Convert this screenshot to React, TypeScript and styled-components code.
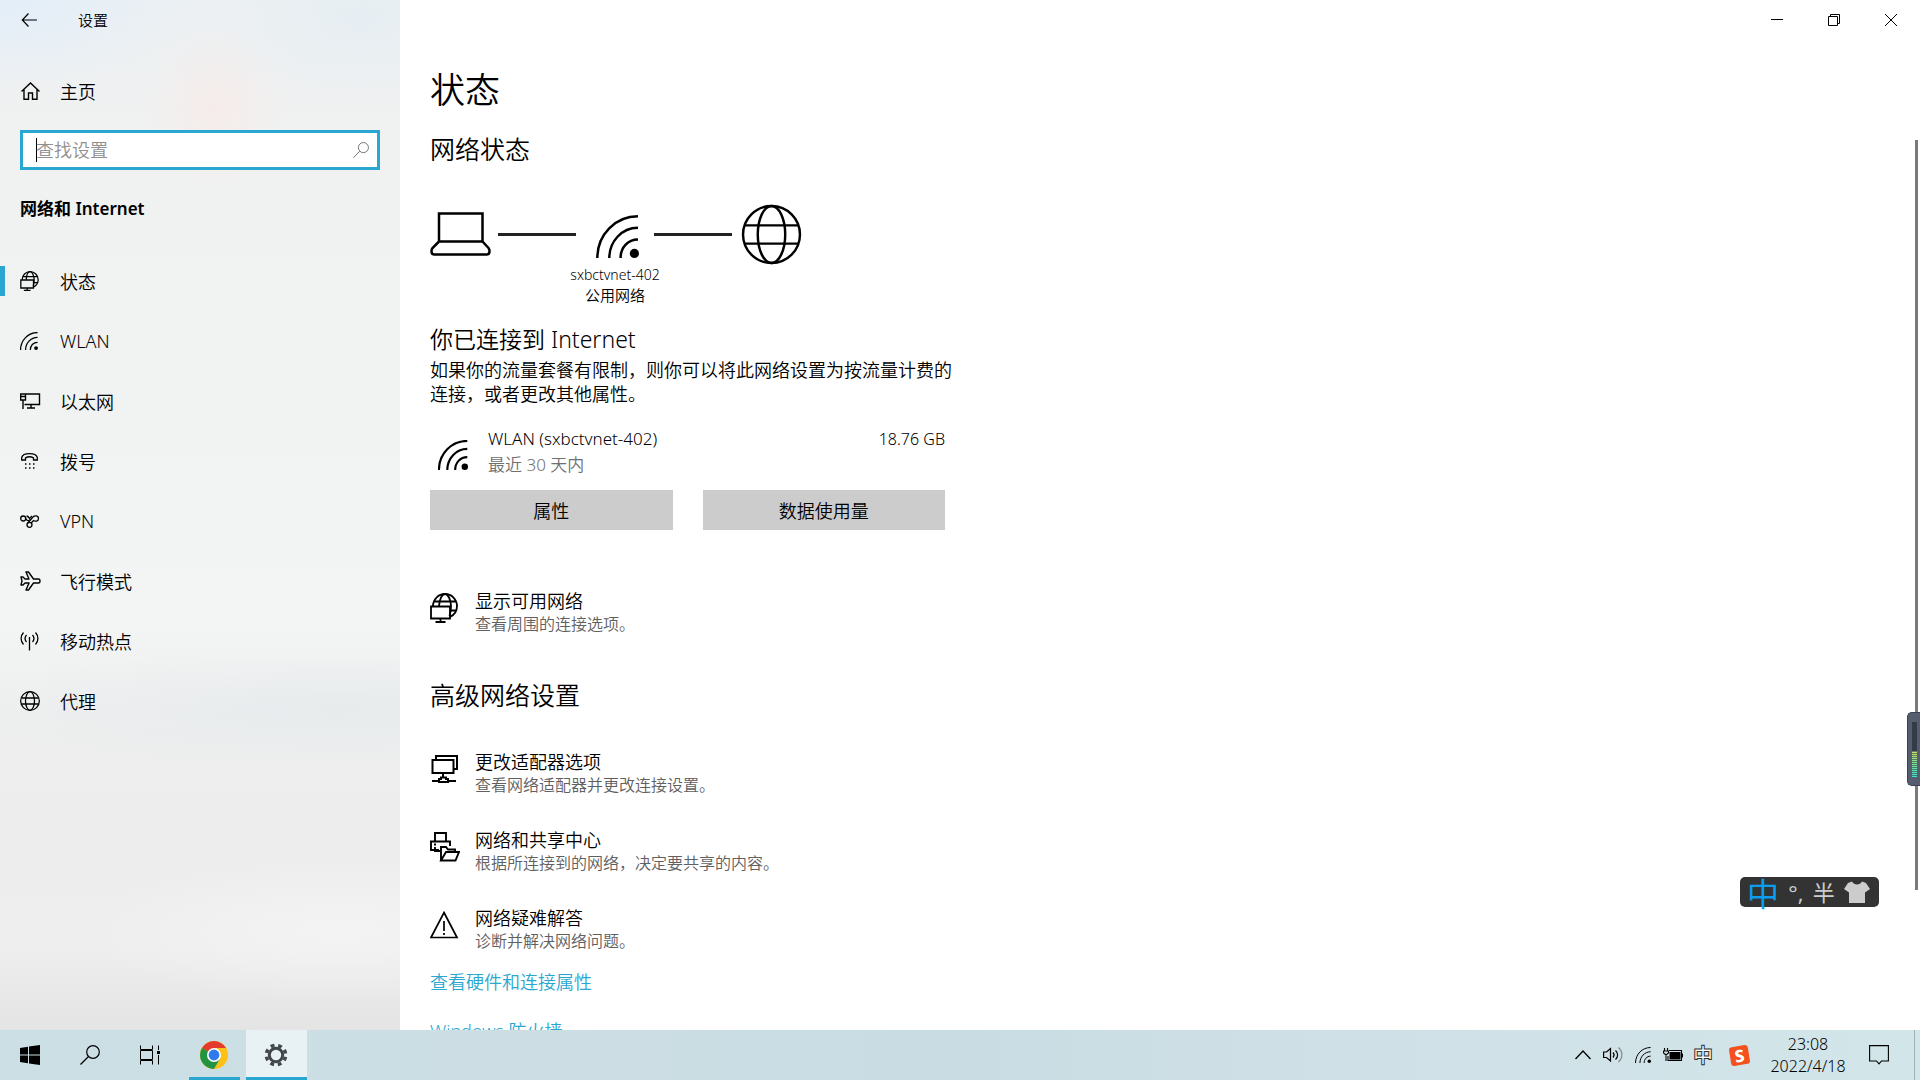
import React from "react";
import styled, { createGlobalStyle, css } from "styled-components";

const ACCENT = "#2aa7d0";

const GlobalStyle = createGlobalStyle`
  *, *::before, *::after { box-sizing: border-box; }
  body {
    margin: 0;
    background: #fff;
    color: #000;
    font-family: "Noto Sans", "Noto Sans CJK SC", sans-serif;
    font-size: 18px;
    font-weight: 350;
  }
  h1, h2, h3, p, ul { margin: 0; padding: 0; font-weight: inherit; }
  ul { list-style: none; }
  button {
    border: 0;
    padding: 0;
    background: none;
    color: inherit;
    font: inherit;
  }
  a { color: inherit; text-decoration: none; }
  svg { display: block; flex: none; }
`;

const Desktop = styled.div`
  position: relative;
  display: flex;
  flex-direction: column;
  height: 100vh;
  overflow: hidden;
`;

const SettingsWindow = styled.div`
  flex: 1;
  min-height: 0;
  display: grid;
  grid-template-columns: 400px minmax(0, 1fr);
`;

/* ---------- sidebar ---------- */

const Sidebar = styled.aside`
  background:
    radial-gradient(ellipse 70px 80px at 215px 108px, rgba(248, 234, 231, 0.7), transparent),
    radial-gradient(ellipse 140px 80px at 360px 20px, rgba(228, 237, 243, 0.7), transparent),
    radial-gradient(ellipse 200px 90px at 0 0, rgba(226, 238, 250, 0.9), transparent),
    radial-gradient(ellipse 420px 60px at 340px 710px, rgba(229, 234, 236, 0.8), transparent),
    radial-gradient(ellipse 260px 70px at 340px 930px, rgba(244, 244, 244, 0.9), transparent),
    linear-gradient(#ecf0f2 0, #f0f1f1 130px, #f1f2f2 400px, #f3f4f4 620px, #eeeeee 740px, #ededed 850px, #eeeeee 950px, #e4e4e4 100%);
`;

const SideTitle = styled.header`
  display: flex;
  align-items: center;
  height: 39px;
  padding-left: 20px;
  gap: 40px;
  font-size: 15px;
`;

const HomeButton = styled.button`
  display: flex;
  align-items: center;
  width: 100%;
  height: 48px;
  margin-top: 28px;
  padding-left: 20px;
  gap: 19px;
`;

const SearchBox = styled.label`
  display: flex;
  align-items: center;
  height: 40px;
  margin: 15px 20px 0;
  padding: 0 8px 0 13px;
  border: 3px solid ${ACCENT};
  background: #fff;
`;

const Caret = styled.span`
  width: 1px;
  height: 24px;
  margin-right: -1px;
  background: #000;
`;

const SearchInput = styled.input`
  flex: 1;
  min-width: 0;
  padding: 0;
  border: 0;
  outline: 0;
  background: none;
  font: inherit;
  caret-color: transparent;
  &::placeholder { color: #909090; opacity: 1; }
`;

const SideHeading = styled.h2`
  margin-top: 24px;
  padding-left: 20px;
  font-size: 17px;
  font-weight: 600;
  line-height: 30px;
`;

const NavList = styled.ul`
  margin-top: 27px;
`;

const NavLink = styled.a<{ $active?: boolean }>`
  display: flex;
  align-items: center;
  height: 60px;
  gap: 19px;
  &::before {
    content: "";
    width: 5px;
    height: 30px;
    margin-right: -4px;
    background: ${(p) => (p.$active ? ACCENT : "transparent")};
  }
`;

const NavIcon = styled.span`
  display: flex;
  align-items: center;
  width: 21px;
`;

/* ---------- main ---------- */

const Main = styled.main`
  min-height: 0;
  overflow: hidden;
  background: #fff;
`;

const CaptionBar = styled.div`
  display: flex;
  justify-content: flex-end;
  height: 40px;
  padding-right: 1px;
`;

const CaptionButton = styled.button`
  display: grid;
  place-items: center;
  width: 57px;
`;

const Content = styled.div`
  padding: 26px 30px 0;
`;

const PageTitle = styled.h1`
  font-size: 35px;
  line-height: 48px;
`;

const SectionTitle = styled.h2<{ $gap: number }>`
  margin-top: ${(p) => p.$gap}px;
  font-size: 25px;
  line-height: 34px;
`;

const Diagram = styled.div`
  display: grid;
  grid-template-columns: 68px 78px 78px 78px 70px;
  grid-template-rows: 60px auto;
  align-items: center;
  margin-top: 38px;
`;

const DiagramCell = styled.div<{ $align: string }>`
  display: flex;
  justify-content: ${(p) => p.$align};
`;

const SignalCell = styled(DiagramCell)`
  padding: 4px 0 0 4px;
`;

const Wire = styled.div`
  height: 3px;
  background: #222;
`;

const DiagramLabel = styled.div`
  grid-column: 2 / 5;
  padding-top: 1px;
  font-size: 14px;
  line-height: 20px;
  text-align: center;
`;

const NetworkKind = styled.div`
  font-size: 15px;
`;

const Connected = styled.h3`
  margin-top: 19px;
  font-size: 23px;
  line-height: 30px;
`;

const Paragraph = styled.p`
  max-width: 524px;
  margin-top: 4px;
  line-height: 24px;
`;

const Panel = styled.div`
  max-width: 515px;
`;

const Usage = styled.div`
  display: flex;
  margin-top: 20px;
  padding-left: 8px;
  gap: 20px;
  font-size: 17px;
  line-height: 26px;
`;

const UsageIcon = styled.div`
  padding-top: 14px;
`;

const UsageText = styled.div`
  flex: 1;
`;

const UsageAmount = styled.div`
  font-size: 16px;
`;

const Muted = styled.div`
  color: #707070;
`;

const ButtonRow = styled.div`
  display: grid;
  grid-template-columns: 1fr 1fr;
  gap: 30px;
  margin-top: 12px;
`;

const PanelButton = styled.button`
  height: 40px;
  background: #ccc;
`;

const LinkGroup = styled.div<{ $gap: number }>`
  display: flex;
  flex-direction: column;
  align-items: flex-start;
  gap: 32px;
  margin-top: ${(p) => p.$gap}px;
`;

const LinkItem = styled.a`
  display: flex;
  align-items: flex-start;
  gap: 15px;
`;

const LinkIcon = styled.span`
  width: 30px;
  padding-top: 4px;
`;

const LinkTitle = styled.div`
  line-height: 24px;
`;

const LinkDescription = styled.div`
  color: #606060;
  font-size: 16px;
  line-height: 22px;
`;

const TextLinks = styled.div`
  display: flex;
  flex-direction: column;
  align-items: flex-start;
  gap: 19px;
  margin-top: 15px;
  color: ${ACCENT};
  line-height: 30px;
`;

/* ---------- overlays ---------- */

const Scrollbar = styled.div`
  position: absolute;
  top: 140px;
  right: 2px;
  width: 3px;
  height: 750px;
  background: #7a7a7a;
`;

const Meter = styled.div`
  position: absolute;
  top: 712px;
  right: 0;
  width: 13px;
  height: 74px;
  padding: 9px 3px 8px 4px;
  border: 1px solid #3b4152;
  border-right: 0;
  border-radius: 5px 0 0 5px;
  background: #565d6e;
`;

const MeterBars = styled.div`
  height: 100%;
  background:
    repeating-linear-gradient(transparent 0 1px, rgba(50, 58, 72, 0.6) 1px 2px),
    linear-gradient(#343a48 0 52%, #cfe06a 52%, #7fe08c 75%, #3fe0d0 100%);
`;

const ImeBar = styled.div`
  position: absolute;
  right: 41px;
  bottom: 173px;
  display: flex;
  align-items: center;
  justify-content: space-between;
  width: 139px;
  height: 30px;
  padding: 0 9px 0 7px;
  border-radius: 5px;
  background: #333;
  color: #ccc;
  font-size: 22px;
  font-weight: 400;
  line-height: 30px;
`;

const ImeMode = styled.span`
  color: #0a9df0;
  font-family: "Noto Sans CJK SC", sans-serif;
  font-size: 32px;
  line-height: 30px;
`;

/* ---------- taskbar ---------- */

const Taskbar = styled.footer`
  display: flex;
  align-items: stretch;
  height: 50px;
  background: linear-gradient(90deg, #cbdfe4 0, #ccdee4 30%, #c9dce3 50%, #cfe1e6 70%, #d2e5e9 100%);
`;

const TaskButton = styled.button<{ $state?: "open" | "active" }>`
  display: grid;
  place-items: center;
  width: 60px;
  ${(p) =>
    p.$state === "open" &&
    css`
      width: 51px;
      margin: 0 6px 0 9px;
      padding-right: 2px;
      box-shadow: inset 0 -3px ${ACCENT};
    `}
  ${(p) =>
    p.$state === "active" &&
    css`
      width: 61px;
      padding-right: 2px;
      background: #e8f1f4;
      box-shadow: inset 0 -3px ${ACCENT};
    `}
`;

const Tray = styled.div`
  display: flex;
  align-items: center;
  gap: 10px;
  margin-left: auto;
`;

const TrayButton = styled.button`
  display: grid;
  place-items: center;
  width: 20px;
  height: 50px;
`;

const TrayIme = styled(TrayButton)`
  margin-right: 6px;
  color: #fff;
  font-family: "Noto Sans CJK SC", sans-serif;
  font-size: 20px;
  font-weight: 700;
  line-height: 20px;
  -webkit-text-stroke: 1px #333;
`;

const SogouBadge = styled.span`
  display: grid;
  place-items: center;
  width: 19px;
  height: 19px;
  border-radius: 3px;
  background: #f4511e;
  color: #fff;
  font-size: 17px;
  font-weight: 800;
  line-height: 19px;
  transform: rotate(-9deg);
`;

const Clock = styled.button`
  width: 98px;
  margin-right: 2px;
  font-size: 16px;
  line-height: 22px;
  text-align: center;
`;

const ShowDesktop = styled.button`
  width: 6px;
  height: 50px;
  margin-left: 15px;
  border-left: 1px solid #9fb0b6;
`;

/* ---------- icons ---------- */

type IconProps = { size?: number; stroke?: number };

const line = { fill: "none", stroke: "currentColor" } as const;

const Wifi = ({ size = 20, stroke = 2 }: IconProps) => (
  <svg width={size} height={size} viewBox="0 0 42 42" {...line} strokeWidth={stroke}>
    <path d="M1.3 42C1.3 19 19 1.3 41 1.3M13 42C13 26 25 12.500 41 12.500M24 42C24 32 31 24 41 24" />
    <circle cx="37.500" cy="37.500" r="4.500" fill="currentColor" stroke="none" />
  </svg>
);

const Globe = ({ size = 20, stroke = 2 }: IconProps) => (
  <svg width={size} height={size} viewBox="0 0 60 60" {...line} strokeWidth={stroke}>
    <circle cx="30" cy="30" r="28" />
    <ellipse cx="30" cy="30" rx="13.500" ry="28" />
    <path d="M4 21H56M4 39H56" />
  </svg>
);

const Laptop = () => (
  <svg width="61" height="44" viewBox="0 0 61 44" {...line} strokeWidth="2.500">
    <path d="M9 1.500H52.500V29.500H9ZM9 29.500L2.500 36C1 38 1 42.500 4 42.500H57C60 42.500 60 38 58.500 36L52.500 29.500" />
  </svg>
);

const NetGlobe = ({ size = 28, stroke = 1.8 }: IconProps) => (
  <svg width={size} height={Math.round((size * 30) / 28)} viewBox="0 0 28 30" {...line} strokeWidth={stroke}>
    <path d="M3 13A12 12 0 0 1 27 13A12 12 0 0 1 20 23.900M4 8.500H26M20 17.500H26.500" />
    <path d="M9 13C9.500 6 12 1 15 1S21 7 21 13C21 17 20.500 20 19.500 23" />
    <path d="M1 13.500H20V25.500H1ZM10.500 25.500V29M5.500 29H15.500" />
  </svg>
);

const BackIcon = () => (
  <svg width="18" height="16" viewBox="0 0 18 16" {...line} strokeWidth="1.200">
    <path d="M17 8H2.500M8.500 1.500L2.300 8L8.500 14.500" />
  </svg>
);

const HomeIcon = () => (
  <svg width="21" height="20" viewBox="0 0 21 20" {...line} strokeWidth="1.400">
    <path d="M1.500 10.500L10.500 2L19.500 10.500M4 8.500V18.300H8.500V12H12.500V18.300H17V8.500" />
  </svg>
);

const SearchIcon = ({ size = 16, stroke = 1.2 }: IconProps) => (
  <svg width={size} height={size} viewBox="0 0 20 20" {...line} strokeWidth={stroke}>
    <circle cx="13" cy="7" r="6.300" />
    <path d="M8.500 11.500L0.500 19.500" />
  </svg>
);

const Ethernet = () => (
  <svg width="21" height="18" viewBox="0 0 21 18" {...line} strokeWidth="1.400">
    <path d="M6 2H19.500V12.500H4.500M11 12.500V16M7 16H15M3 8V17" />
    <path d="M0.700 2H5.500V8H0.700ZM1 4.500H5" />
  </svg>
);

const DialUp = () => (
  <svg width="20" height="18" viewBox="0 0 20 18" {...line} strokeWidth="1.300">
    <path d="M1.700 8V5.500C3 .300 16 .300 17.300 5.500V8H13.500V5.800C11 4.500 8 4.500 5.500 5.800V8Z" />
    <path d="M5 12H14.500M5 16H14.500" strokeDasharray="1.500 2.500" />
  </svg>
);

const Vpn = () => (
  <svg width="20" height="16" viewBox="0 0 20 16" {...line} strokeWidth="1.300">
    <circle cx="3.200" cy="5.500" r="2.500" />
    <path d="M5.700 5.500C7 8.500 9 8 10 6.500M6.500 3C8 3.200 9 4.500 9.500 5.500L12 3" />
    <path d="M7.800 10L13 4C14.500 2.200 18.500 2.500 18.500 5.500S15 8.600 13.500 7.500L11.200 10" />
    <circle cx="9.500" cy="11.800" r="2.500" />
  </svg>
);

const Plane = () => (
  <svg width="21" height="20" viewBox="0 0 21 20" {...line} strokeWidth="1.400" strokeLinejoin="round">
    <path d="M1 6H3L5 8H9L6 1H8.500L13.500 8H18.500C20.500 8 20.500 12 18.500 12H13.500L8.500 19H6L9 12H5L3 14H1L2 10Z" />
  </svg>
);

const Hotspot = () => (
  <svg width="20" height="20" viewBox="0 0 20 20" {...line} strokeWidth="1.300">
    <path d="M9.500 6V19.500M6.500 4C4.800 6 4.800 9 6.500 11M3.500 1.500C.300 5 .300 10 3.500 13.500M12.500 4C14.200 6 14.200 9 12.500 11M15.500 1.500C18.700 5 18.700 10 15.500 13.500" />
  </svg>
);

const Adapter = () => (
  <svg width="30" height="30" viewBox="0 0 30 30" {...line} strokeWidth="2">
    <path d="M6 5V2H27V15H24M2.500 6H23.500V19H2.500ZM13 19V24M2 27H9M18 27H26M9 25H11V23.500H16V25H18V28H9Z" />
  </svg>
);

const Sharing = () => (
  <svg width="30" height="30" viewBox="0 0 30 30" {...line} strokeWidth="1.900">
    <path d="M5 9V1H16V9M9 18H1V9.500H20V14M4 12.500H6" />
    <path d="M11 28.500V15H16L18 17.500H25V20M11 28.500L16 20H29L25.500 28.500ZM5 15V19H10" />
  </svg>
);

const Warning = () => (
  <svg width="30" height="30" viewBox="0 0 30 30" {...line} strokeWidth="1.700">
    <path d="M14 2.500L27 27.500H1ZM14 11V21M14 23V25" />
  </svg>
);

const StartIcon = () => (
  <svg width="20" height="20" viewBox="0 0 20 20" fill="#000">
    <path d="M0 3L8 1.700V9.500H0ZM9 1.500L20 0V9.500H9ZM0 10.500H8V18.300L0 17ZM9 10.500H20V20L9 18.500Z" />
  </svg>
);

const TaskView = () => (
  <svg width="20" height="20" viewBox="0 0 20 20" {...line} strokeWidth="1">
    <path d="M.500 .500V4.500H12.500V.500M.500 5.500H12.500V14.500H.500ZM.500 19.500V15.500H12.500V19.500M18.500 .500V5M18.500 10V19.500" />
    <path d="M17 6H20V9H17Z" fill="currentColor" stroke="none" />
  </svg>
);

const Chrome = () => (
  <svg width="28" height="28" viewBox="0 0 28 28">
    <circle cx="14" cy="14" r="14" fill="#fbc116" />
    <path d="M14 14L1.900 7A14 14 0 0 1 26.100 7Z" fill="#e33b2e" />
    <path d="M14 14L1.900 7A14 14 0 0 0 14 28L20 17.500Z" fill="#229342" />
    <path d="M14 7H26.100L20 14Z" fill="#fbc116" />
    <circle cx="14" cy="14" r="7" fill="#fff" />
    <circle cx="14" cy="14" r="5.400" fill="#2f7bee" />
  </svg>
);

const Gear = () => (
  <svg width="24" height="24" viewBox="0 0 24 24" {...line} stroke="#414649">
    <circle cx="12" cy="12" r="6.700" strokeWidth="3" />
    <circle cx="12" cy="12" r="9.700" strokeWidth="3.400" strokeDasharray="3.800 3.818" strokeDashoffset="-1.900" />
  </svg>
);

const Speaker = () => (
  <svg width="20" height="18" viewBox="0 0 20 18" {...line} strokeWidth="1.200">
    <path d="M.600 6H3.500L7.500 2.500V15L3.500 11.500H.600ZM10 6.500C11.300 8 11.300 10 10 11.500M12.500 4.500C15.300 7 15.300 11 12.500 13.500" />
    <path d="M15.500 1.500C20 5.500 20 12 15.500 16" opacity=".4" />
  </svg>
);

const Battery = () => (
  <svg width="20" height="14" viewBox="0 0 20 14" {...line} strokeWidth="1.100">
    <path d="M6 2.500H18.500V12.500H5V8M1.500 0V3M4.500 0V3M.500 3H5.500V5L3 7L.500 5ZM3 7V13" />
    <path d="M6.500 4H17.500V11.500H6.500ZM18.500 5.500H20V9.500H18.500Z" fill="currentColor" stroke="none" />
  </svg>
);

const Notice = () => (
  <svg width="20" height="20" viewBox="0 0 20 20" {...line} strokeWidth="1.100">
    <path d="M.600 .600H19.400V16H12.500L10 18.800L7.500 16H.600Z" />
  </svg>
);

const Shirt = () => (
  <svg width="26" height="23" viewBox="0 0 26 23" fill="#ccc">
    <path d="M8 .500C10 4.500 16 4.500 18 .500L22 2L26 8L21 11.500V22H5V11.500L0 8L4 2Z" />
  </svg>
);

const navItems: { label: string; icon: React.ReactNode }[] = [
  { label: "状态", icon: <NetGlobe size={19} stroke={1.9} /> },
  { label: "WLAN", icon: <Wifi size={18} stroke={3} /> },
  { label: "以太网", icon: <Ethernet /> },
  { label: "拨号", icon: <DialUp /> },
  { label: "VPN", icon: <Vpn /> },
  { label: "飞行模式", icon: <Plane /> },
  { label: "移动热点", icon: <Hotspot /> },
  { label: "代理", icon: <Globe size={20} stroke={3.8} /> },
];

const advanced = [
  { title: "更改适配器选项", text: "查看网络适配器并更改连接设置。", icon: <Adapter /> },
  { title: "网络和共享中心", text: "根据所连接到的网络，决定要共享的内容。", icon: <Sharing /> },
  { title: "网络疑难解答", text: "诊断并解决网络问题。", icon: <Warning /> },
];

const Entry = ({ icon, title, text }: { icon: React.ReactNode; title: string; text: string }) => (
  <LinkItem href="#">
    <LinkIcon>{icon}</LinkIcon>
    <div>
      <LinkTitle>{title}</LinkTitle>
      <LinkDescription>{text}</LinkDescription>
    </div>
  </LinkItem>
);

export default function App() {
  return (
    <Desktop lang="zh-CN">
      <GlobalStyle />
      <SettingsWindow>
        <Sidebar>
          <SideTitle>
            <button aria-label="返回"><BackIcon /></button>
            <span>设置</span>
          </SideTitle>
          <HomeButton>
            <HomeIcon />
            <span>主页</span>
          </HomeButton>
          <SearchBox>
            <Caret />
            <SearchInput type="text" placeholder="查找设置" aria-label="查找设置" />
            <Muted><SearchIcon size={16} /></Muted>
          </SearchBox>
          <SideHeading>网络和 Internet</SideHeading>
          <nav>
            <NavList>
              {navItems.map((item, i) => (
                <li key={item.label}>
                  <NavLink href="#" $active={i === 0}>
                    <NavIcon>{item.icon}</NavIcon>
                    <span>{item.label}</span>
                  </NavLink>
                </li>
              ))}
            </NavList>
          </nav>
        </Sidebar>

        <Main>
          <CaptionBar>
            <CaptionButton aria-label="最小化">
              <svg width="12" height="12" viewBox="0 0 12 12" {...line}><path d="M0 5.500H12" /></svg>
            </CaptionButton>
            <CaptionButton aria-label="还原">
              <svg width="12" height="12" viewBox="0 0 12 12" {...line}><path d="M.500 2.500H9.500V11.500H.500ZM2.500 2.500V.500H11.500V9.500H9.500" /></svg>
            </CaptionButton>
            <CaptionButton aria-label="关闭">
              <svg width="12" height="12" viewBox="0 0 12 12" {...line}><path d="M0 0L12 12M12 0L0 12" /></svg>
            </CaptionButton>
          </CaptionBar>
          <Content>
            <PageTitle>状态</PageTitle>
            <SectionTitle $gap={18}>网络状态</SectionTitle>
            <Diagram>
              <DiagramCell $align="flex-start"><Laptop /></DiagramCell>
              <Wire />
              <SignalCell $align="center"><Wifi size={43} stroke={2.4} /></SignalCell>
              <Wire />
              <DiagramCell $align="flex-end"><Globe size={61} stroke={2.4} /></DiagramCell>
              <DiagramLabel>
                <div>sxbctvnet-402</div>
                <NetworkKind>公用网络</NetworkKind>
              </DiagramLabel>
            </Diagram>
            <Connected>你已连接到 Internet</Connected>
            <Paragraph>如果你的流量套餐有限制，则你可以将此网络设置为按流量计费的连接，或者更改其他属性。</Paragraph>
            <Panel>
              <Usage>
                <UsageIcon><Wifi size={30} stroke={3} /></UsageIcon>
                <UsageText>
                  <div>WLAN (sxbctvnet-402)</div>
                  <Muted>最近 30 天内</Muted>
                </UsageText>
                <UsageAmount>18.76 GB</UsageAmount>
              </Usage>
              <ButtonRow>
                <PanelButton>属性</PanelButton>
                <PanelButton>数据使用量</PanelButton>
              </ButtonRow>
            </Panel>
            <LinkGroup $gap={59}>
              <Entry icon={<NetGlobe />} title="显示可用网络" text="查看周围的连接选项。" />
            </LinkGroup>
            <SectionTitle $gap={43}>高级网络设置</SectionTitle>
            <LinkGroup $gap={38}>
              {advanced.map((item) => (
                <Entry key={item.title} {...item} />
              ))}
            </LinkGroup>
            <TextLinks>
              <a href="#">查看硬件和连接属性</a>
              <a href="#">Windows 防火墙</a>
            </TextLinks>
          </Content>
        </Main>
      </SettingsWindow>

      <Taskbar>
        <TaskButton aria-label="开始"><StartIcon /></TaskButton>
        <TaskButton aria-label="搜索"><SearchIcon size={20} stroke={1.2} /></TaskButton>
        <TaskButton aria-label="任务视图"><TaskView /></TaskButton>
        <TaskButton aria-label="Chrome" $state="open"><Chrome /></TaskButton>
        <TaskButton aria-label="设置" $state="active"><Gear /></TaskButton>
        <Tray>
          <TrayButton aria-label="显示隐藏的图标">
            <svg width="16" height="10" viewBox="0 0 16 10" {...line} strokeWidth="1.300"><path d="M.500 9L8 1L15.500 9" /></svg>
          </TrayButton>
          <TrayButton aria-label="音量"><Speaker /></TrayButton>
          <TrayButton aria-label="WLAN"><Wifi size={16} stroke={2.6} /></TrayButton>
          <TrayButton aria-label="电池"><Battery /></TrayButton>
          <TrayIme>中</TrayIme>
          <TrayButton><SogouBadge>S</SogouBadge></TrayButton>
          <Clock>
            23:08
            <br />
            2022/4/18
          </Clock>
          <TrayButton aria-label="通知"><Notice /></TrayButton>
          <ShowDesktop aria-label="显示桌面" />
        </Tray>
      </Taskbar>

      <Scrollbar />
      <Meter>
        <MeterBars />
      </Meter>
      <ImeBar>
        <ImeMode>中</ImeMode>
        <span>°,</span>
        <span>半</span>
        <Shirt />
      </ImeBar>
    </Desktop>
  );
}
